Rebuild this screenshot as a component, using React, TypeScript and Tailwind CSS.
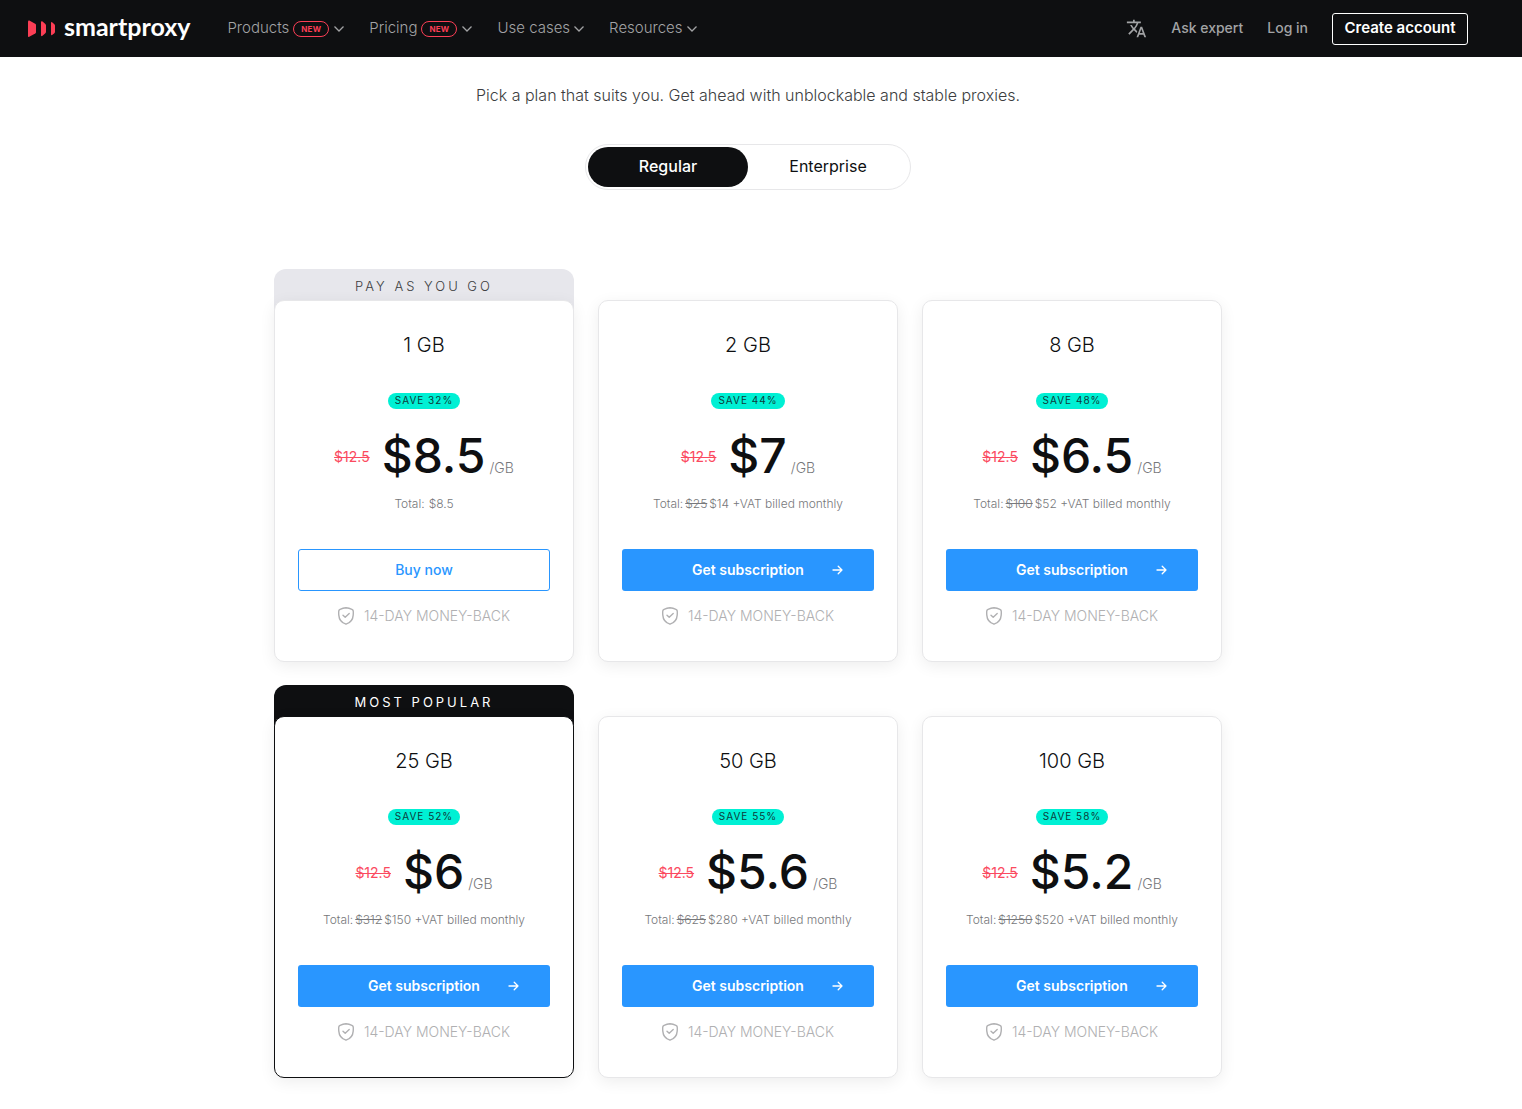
import { useState } from 'react';
import clsx from 'clsx';
import { MdTranslate } from 'react-icons/md';

type Plan = {
  size: string;
  save: string;
  price: string;
  oldTotal?: string;
  total: string;
  tag?: 'PAY AS YOU GO' | 'MOST POPULAR';
};

const navItems = [
  { label: 'Products', isNew: true },
  { label: 'Pricing', isNew: true },
  { label: 'Use cases', isNew: false },
  { label: 'Resources', isNew: false },
];

const plans: Plan[] = [
  { size: '1 GB', save: 'SAVE 32%', price: '$8.5', total: '$8.5', tag: 'PAY AS YOU GO' },
  { size: '2 GB', save: 'SAVE 44%', price: '$7', oldTotal: '$25', total: '$14 +VAT billed monthly' },
  { size: '8 GB', save: 'SAVE 48%', price: '$6.5', oldTotal: '$100', total: '$52 +VAT billed monthly' },
  { size: '25 GB', save: 'SAVE 52%', price: '$6', oldTotal: '$312', total: '$150 +VAT billed monthly', tag: 'MOST POPULAR' },
  { size: '50 GB', save: 'SAVE 55%', price: '$5.6', oldTotal: '$625', total: '$280 +VAT billed monthly' },
  { size: '100 GB', save: 'SAVE 58%', price: '$5.2', oldTotal: '$1250', total: '$520 +VAT billed monthly' },
];

function Logo() {
  return (
    <a href="#" className="flex items-center gap-2 text-white">
      <svg width="28" height="18" viewBox="0 0 28 18" fill="#fb3e55" aria-hidden="true">
        <path d="M0 1.400C0 .6.7.2 1.300.5L7.200 3.800c.5.3.8.7.8 1.300v7.100c0 .6-.3 1-.8 1.300L1.300 16.800c-.6.3-1.300-.1-1.300-.9z" />
        <path d="M13 2.100c0-.8.6-1.200 1.200-.8l2.900 2.500c.5.400.9.900.9 1.500v6.700c0 .6-.4 1.100-.9 1.500l-2.900 2.500c-.6.400-1.200 0-1.200-.8z" />
        <path d="M23 3c0-.8.6-1.100 1.100-.7l2 1.600c.6.500.9 1 .9 1.700v6.100c0 .7-.3 1.200-.9 1.700l-2 1.600c-.5.400-1.100.1-1.100-.7z" />
      </svg>
      <span className="pb-1.5 font-['Lato'] text-[25px] leading-6 font-bold">smartproxy</span>
    </a>
  );
}

function Chevron() {
  return (
    <svg width="10" height="6" viewBox="0 0 10 6" fill="none" stroke="currentColor" strokeWidth="1.3" aria-hidden="true">
      <path d="M.5.5 5 5 9.5.5" />
    </svg>
  );
}

function ShieldIcon() {
  return (
    <svg width="16" height="18" viewBox="0 0 16 18" fill="none" stroke="currentColor" strokeWidth="1.4" strokeLinecap="round" strokeLinejoin="round" aria-hidden="true">
      <path d="M8 .8c2 .2 4 .7 5.900 1.500.7.300 1.200.8 1.300 1.500.2 1.500.1 2.900 0 4.300-.3 4.500-2.900 7.700-7.200 9.100C3.700 15.800 1.100 12.600.8 8.100c-.1-1.400-.2-2.800 0-4.300.1-.7.6-1.200 1.300-1.500C4 1.500 6 1 8 .8z" />
      <path d="m5 8.200 2.200 2.100 4-3.700" />
    </svg>
  );
}

function ArrowIcon() {
  return (
    <svg width="11" height="10" viewBox="0 0 11 10" fill="none" stroke="currentColor" strokeWidth="1.3" strokeLinecap="round" strokeLinejoin="round" aria-hidden="true">
      <path d="M1 5h9M6.200 1.200 10 5 6.200 8.800" />
    </svg>
  );
}

function Header() {
  return (
    <header className="bg-[#0e0f11] pr-[26px] font-['Inter',sans-serif] text-sm text-[#a2a3a5]">
      <div className="flex h-[57px] items-center justify-between px-7">
        <div className="flex items-center gap-[37px]">
          <Logo />
          <nav className="flex items-center gap-[25px] text-[15px] leading-5 font-light">
            {navItems.map((item) => (
              <button key={item.label} className="flex items-center gap-1">
                <span className="pb-0.5">{item.label}</span>
                {item.isNew && (
                  <span className="mr-px flex h-4 w-9 items-center justify-center rounded-full border border-[#fb3e55] text-[8px] font-bold tracking-wide text-[#fb3e55]">
                    NEW
                  </span>
                )}
                <Chevron />
              </button>
            ))}
          </nav>
        </div>
        <div className="flex items-center gap-6 font-medium">
          <button aria-label="Change language">
            <MdTranslate size={21} />
          </button>
          <a href="#" className="pb-0.5">Ask expert</a>
          <a href="#" className="pb-0.5">Log in</a>
          <button className="h-8 w-34 rounded-[3px] border border-white pb-0.5 text-[15px] font-semibold text-white">
            Create account
          </button>
        </div>
      </div>
    </header>
  );
}

function PlanCard({ plan }: { plan: Plan }) {
  const popular = plan.tag === 'MOST POPULAR';
  const payg = plan.tag === 'PAY AS YOU GO';

  return (
    <article>
      <div
        className={clsx(
          'h-10 rounded-t-xl text-center text-[13px] leading-[34px] tracking-[3px]',
          popular && 'bg-[#0e0f11] text-white',
          payg && 'bg-[#e7e7ec] font-light text-[#3c3d40]',
        )}
      >
        {plan.tag}
      </div>
      <div
        className={clsx(
          'relative -mt-[9px] flex flex-col items-center rounded-[10px] border bg-white px-[23px] pt-[30px] pb-9 shadow-[0_4px_16px_rgba(14,15,17,0.07)]',
          popular ? 'border-[#0e0f11]' : 'border-[#e7e7e9]',
        )}
      >
        <h2 className="text-xl leading-7 font-light text-[#0e0f11]">{plan.size}</h2>
        <span className="mt-[34px] h-4 rounded-full bg-[#00f0d4] px-[7px] text-[10px] leading-[15px] tracking-[1px] text-[#0e3b3a]">
          {plan.save}
        </span>
        <div className="mt-[23px] flex h-12 items-baseline">
          <s className="mr-3 self-center pt-0.5 text-sm leading-5 text-[#fb4a60]">$12.5</s>
          <strong className="text-5xl leading-12 font-medium text-[#0e0f11]">{plan.price}</strong>
          <span className="ml-1 text-sm font-light text-[#77787b]">/GB</span>
        </div>
        <p className="mt-4 flex gap-0.5 text-xs leading-4 font-light text-[#77787b]">
          <span className={clsx(!plan.oldTotal && 'pr-0.5')}>Total:</span>
          {plan.oldTotal && <s>{plan.oldTotal}</s>}
          <span>{plan.total}</span>
        </p>
        {payg ? (
          <button className="mt-[37px] h-[42px] w-full rounded-[3px] border border-[#2996ff] text-sm font-medium text-[#2996ff]">
            Buy now
          </button>
        ) : (
          <button className="mt-[37px] grid h-[42px] w-full grid-cols-[1fr_auto_1fr] items-center rounded-[3px] bg-[#2996ff] text-sm font-semibold text-white">
            <span className="col-start-2">Get subscription</span>
            <span className="pl-7">
              <ArrowIcon />
            </span>
          </button>
        )}
        <p className="mt-4 flex items-center gap-2.5 text-sm leading-[18px] font-light text-[#b0b0b2]">
          <ShieldIcon />
          14-DAY MONEY-BACK
        </p>
      </div>
    </article>
  );
}

export default function App() {
  const [tier, setTier] = useState('Regular');

  return (
    <div className="min-h-screen bg-white">
      <Header />
      <main className="pr-[26px] pb-8 font-['Inter',sans-serif]">
        <p className="pt-[26px] text-center text-base leading-6 font-light text-[#3c3d40]">
          Pick a plan that suits you. Get ahead with unblockable and stable proxies.
        </p>

        {/* Plan type */}
        <div className="mx-auto mt-[37px] flex w-fit rounded-full border border-[#e7e7e9] p-0.5">
          {['Regular', 'Enterprise'].map((name) => (
            <button
              key={name}
              onClick={() => setTier(name)}
              aria-pressed={tier === name}
              className={clsx(
                'h-10 w-40 rounded-full pb-0.5 text-base',
                tier === name ? 'bg-[#0e0f11] font-medium text-white' : 'text-[#0e0f11]',
              )}
            >
              {name}
            </button>
          ))}
        </div>

        {/* Plans */}
        <div className="mx-auto mt-[79px] grid max-w-[948px] grid-cols-3 gap-x-6 gap-y-[23px]">
          {plans.map((plan) => (
            <PlanCard key={plan.size} plan={plan} />
          ))}
        </div>
      </main>
    </div>
  );
}
